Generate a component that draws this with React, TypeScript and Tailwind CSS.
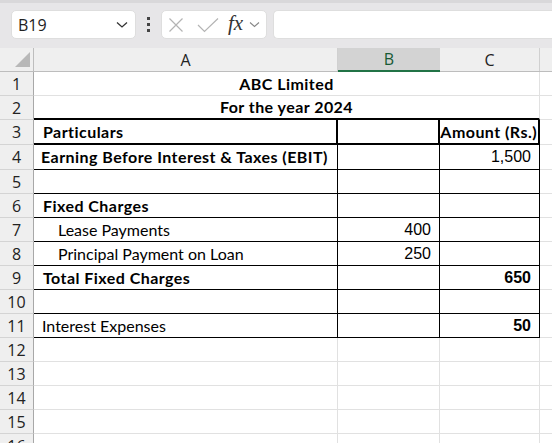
import React from "react";

type Cell = {
  text?: string;
  cls?: string; // text classes
  align?: "l" | "r" | "c";
  pr?: string;
  br?: string; // border-right class
  bb?: string; // border-bottom class
};

const W = { A: "w-[304px]", B: "w-[102px]", C: "w-[100px]" };

const G = "border-[#e1e1e1]";

function CellBox({ w, c }: { w: string; c: Cell }) {
  const align =
    c.align === "r"
      ? `justify-end ${c.pr ?? "pr-[8px]"}`
      : c.align === "c"
      ? "justify-center"
      : "justify-start";
  return (
    <div
      className={`${w} h-full shrink-0 flex items-center overflow-visible whitespace-nowrap ${align} ${
        c.br ?? `border-r ${G}`
      } ${c.bb ?? `border-b ${G}`}`}
    >
      {c.text ? <span className={c.cls}>{c.text}</span> : null}
    </div>
  );
}

const lbl = "font-['Lato',sans-serif] text-[16px] text-black";
const lblB = "font-['Lato',sans-serif] text-[16px] font-bold tracking-[0.45px] text-black";
const num = "font-['Liberation_Sans',Arial,sans-serif] text-[16px] text-black";
const numB = "font-['Liberation_Sans',Arial,sans-serif] text-[16px] font-bold text-black";

const thinR = "border-r border-black";
const thinB = "border-b border-black";

function Row({
  n,
  h,
  cells,
  merged,
}: {
  n: number;
  h: string;
  cells?: [Cell, Cell, Cell];
  merged?: { text: string; bb?: string };
}) {
  return (
    <div className={`flex ${h}`}>
      <div className="w-[34px] shrink-0 h-full bg-[#efefef] border-r border-[#a8a8a8] border-b border-b-[#d4d4d4] flex items-center justify-center font-['Open_Sans',sans-serif] text-[16px] text-[#222]">
        {n}
      </div>
      {merged ? (
        <div
          className={`w-[506px] shrink-0 h-full flex items-center justify-center border-r ${G} ${
            merged.bb ?? `border-b ${G}`
          }`}
        >
          <span className={lblB}>{merged.text}</span>
        </div>
      ) : (
        <>
          <CellBox w={W.A} c={cells![0]} />
          <CellBox w={W.B} c={cells![1]} />
          <CellBox w={W.C} c={cells![2]} />
        </>
      )}
      <div className={`flex-1 h-full border-b ${G}`} />
    </div>
  );
}

export default function App() {
  const e: Cell = {};
  const mid = (c: Cell = {}): Cell => ({ br: thinR, ...c });
  return (
    <div className="w-[552px] h-[443px] overflow-hidden bg-white relative">
      {/* toolbar */}
      <div className="h-[48px] bg-[#e7e6e8] border-t-[3px] border-[#d9d8da] flex items-start pt-[7px]">
        <div className="ml-[11px] w-[125px] h-[29px] bg-white rounded-[5px] border border-[#dedede] flex items-center pl-[6px] pr-[7px]">
          <span className="font-['Open_Sans',sans-serif] text-[16px] text-[#222]">B19</span>
          <svg className="ml-auto" width="12" height="8" viewBox="0 0 12 8">
            <path d="M1 1.5 L6 6 L11 1.5" fill="none" stroke="#333" strokeWidth="1.3" />
          </svg>
        </div>
        <div className="ml-[11px] mt-[7px] flex flex-col gap-[3px]">
          <div className="w-[3px] h-[3px] bg-[#444]" />
          <div className="w-[3px] h-[3px] bg-[#444]" />
          <div className="w-[3px] h-[3px] bg-[#444]" />
        </div>
        <div className="ml-[11px] w-[106px] h-[29px] bg-white rounded-[5px] border border-[#dedede] flex items-center pl-[6px]">
          <svg width="16" height="16" viewBox="0 0 16 16">
            <path d="M1.5 1.5 L14.5 14.5 M14.5 1.5 L1.5 14.5" stroke="#b4b4b4" strokeWidth="1.2" fill="none" />
          </svg>
          <svg className="ml-[13px]" width="22" height="16" viewBox="0 0 22 16">
            <path d="M1 8 L7.5 14.5 L21 1.5" stroke="#b4b4b4" strokeWidth="1.2" fill="none" />
          </svg>
          <span className="ml-[9px] font-['Liberation_Serif',serif] italic text-[21px] text-[#333] leading-none -mt-[2px]">
            fx
          </span>
          <svg className="ml-[6px]" width="11" height="7" viewBox="0 0 11 7">
            <path d="M1 1.5 L5.5 5.5 L10 1.5" fill="none" stroke="#888" strokeWidth="1.1" />
          </svg>
        </div>
        <div className="ml-[6px] flex-1 h-[29px] bg-white rounded-l-[5px] border border-r-0 border-[#dedede]" />
      </div>

      {/* column headers */}
      <div className="flex h-[24px] bg-[#efefef] border-b border-[#bdbdbd]">
        <div className="w-[34px] shrink-0 border-r border-[#bdbdbd] relative">
          <svg className="absolute left-[15px] top-[4px]" width="15" height="15" viewBox="0 0 15 15">
            <path d="M15 0 L15 15 L0 15 Z" fill="#b8b8b8" />
          </svg>
        </div>
        <div className="w-[304px] shrink-0 border-r border-[#d0d0d0] flex items-center justify-center font-['Open_Sans',sans-serif] text-[16px] text-[#222]">
          A
        </div>
        <div className="w-[102px] shrink-0 bg-[#d3d3d3] border-b-2 border-b-[#217346] flex items-center justify-center font-['Open_Sans',sans-serif] text-[16px] text-[#185a35] -mb-px">
          B
        </div>
        <div className="w-[100px] shrink-0 border-r border-[#d0d0d0] flex items-center justify-center font-['Open_Sans',sans-serif] text-[16px] text-[#222]">
          C
        </div>
        <div className="flex-1" />
      </div>

      <Row n={1} h="h-[24px]" merged={{ text: "ABC Limited" }} />
      <Row n={2} h="h-[24px]" merged={{ text: "For the year 2024", bb: "border-b-2 border-b-black" }} />
      <Row
        n={3}
        h="h-[25px]"
        cells={[
          { text: "Particulars", cls: `${lblB} pl-[9px]`, br: "border-r-2 border-black", bb: "border-b-2 border-black" },
          { br: "border-r-2 border-black", bb: "border-b-2 border-black" },
          {
            text: "Amount (Rs.)",
            cls: lblB,
            align: "r",
            pr: "pr-[1px]",
            br: "border-r-2 border-black",
            bb: "border-b-2 border-black",
          },
        ]}
      />
      <Row
        n={4}
        h="h-[25px]"
        cells={[
          mid({ text: "Earning Before Interest & Taxes (EBIT)", cls: `${lblB} pl-[7px]` }),
          mid(),
          mid({ text: "1,500", cls: num, align: "r" }),
        ]}
      />
      <Row n={5} h="h-[24px]" cells={[mid(), mid(), mid()]} />
      <Row
        n={6}
        h="h-[24px]"
        cells={[mid({ text: "Fixed Charges", cls: `${lblB} pl-[9px]` }), mid(), mid()]}
      />
      <Row
        n={7}
        h="h-[24px]"
        cells={[mid({ text: "Lease Payments", cls: `${lbl} pl-[24px]` }), mid({ text: "400", cls: num, align: "r" }), mid()]}
      />
      <Row
        n={8}
        h="h-[24px]"
        cells={[
          mid({ text: "Principal Payment on Loan", cls: `${lbl} pl-[24px]` }),
          mid({ text: "250", cls: num, align: "r", bb: thinB }),
          mid(),
        ]}
      />
      <Row
        n={9}
        h="h-[24px]"
        cells={[mid({ text: "Total Fixed Charges", cls: `${lblB} pl-[9px]` }), mid(), mid({ text: "650", cls: numB, align: "r" })]}
      />
      <Row n={10} h="h-[24px]" cells={[mid(), mid(), mid()]} />
      <Row
        n={11}
        h="h-[24px]"
        cells={[
          mid({ text: "Interest Expenses", cls: `${lbl} pl-[8px]`, bb: thinB }),
          mid({ bb: thinB }),
          mid({ text: "50", cls: numB, align: "r", bb: thinB }),
        ]}
      />
      {[12, 13, 14, 15, 16].map((n) => (
        <Row key={n} n={n} h="h-[24px]" cells={[e, e, e]} />
      ))}
      {void e}
    </div>
  );
}
